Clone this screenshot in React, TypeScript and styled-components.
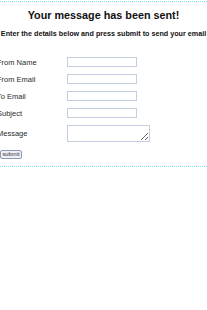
import React from "react";
import styled, { createGlobalStyle } from "styled-components";

const Global = createGlobalStyle`
  html, body { margin: 0; padding: 0; background: #fff; }
  body { font-family: "Liberation Sans", Arial, sans-serif; color: #222; }
`;

const Panel = styled.div`
  width: 207px;
  margin-top: 1px;
  border-top: 1px dotted #7fe8ec;
  border-bottom: 1px dotted #7fe8ec;
  padding: 6px 0 7px;
  box-sizing: border-box;
  overflow: hidden;
`;

const Title = styled.h2`
  margin: 0;
  text-align: center;
  font-size: 10.8px;
  font-weight: bold;
  color: #111;
  line-height: 14px;
`;

const Lead = styled.p`
  margin: 7px 0 0;
  text-align: center;
  font-size: 7.2px;
  font-weight: bold;
  color: #111;
  white-space: nowrap;
  line-height: 10px;
`;

const Form = styled.form`
  margin: 18px 0 0 -3px;
  display: flex;
  flex-direction: column;
  gap: 7px;
`;

const Row = styled.div`
  display: grid;
  grid-template-columns: 70px auto;
  align-items: center;
`;

const Label = styled.label`
  font-size: 7.5px;
  color: #2a2a2a;
`;

const Input = styled.input`
  width: 70px;
  height: 10px;
  box-sizing: border-box;
  border: 1px solid #c3cfe0;
  padding: 0;
  margin: 0;
  background: #fff;
`;

const Area = styled.textarea`
  width: 83px;
  height: 17px;
  box-sizing: border-box;
  border: 1px solid #c3cfe0;
  padding: 0;
  margin: 0;
  resize: both;
`;

const Submit = styled.button`
  margin: 1px 0 0 3px;
  width: 22px;
  height: 9px;
  padding: 0;
  font-family: "Liberation Sans", Arial, sans-serif;
  font-size: 5.8px;
  line-height: 7px;
  color: #333;
  background: #eef0f4;
  border: 1px solid #8a9ab8;
  border-radius: 2px;
  align-self: flex-start;
`;

export default function App() {
  const fields = ["From Name", "From Email", "To Email", "Subject"];
  return (
    <>
      <Global />
      <Panel>
        <Title>Your message has been sent!</Title>
        <Lead>Enter the details below and press submit to send your email</Lead>
        <Form onSubmit={(e) => e.preventDefault()}>
          {fields.map((f) => (
            <Row key={f}>
              <Label>{f}</Label>
              <Input type="text" />
            </Row>
          ))}
          <Row>
            <Label>Message</Label>
            <Area />
          </Row>
          <Submit type="submit">submit</Submit>
        </Form>
      </Panel>
    </>
  );
}
